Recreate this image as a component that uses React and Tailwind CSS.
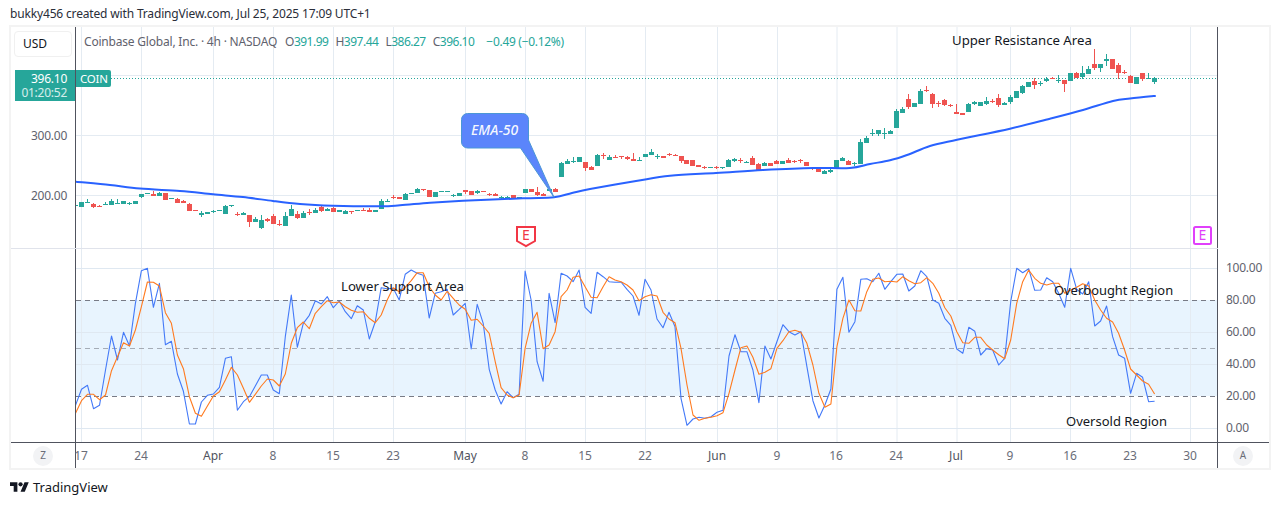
const G = 1, R = 0;
const C2 = [[G,225,229],[G,216,231],[G,217,219,207,219],[R,222,231,219,233],[R,228,231,225,232],[G,221,225,216,225],[G,212,225,207,225],[G,219,221,207,221],[G,213,221],[G,219,221,216,224],
[G,213,222],[G,192,201,192,204],[G,189,192],[R,191,197,184,197],[G,188,197,186,197],[R,188,209],[G,205,208],[R,207,218,204,218],[R,214,218,210,218],[R,222,242,219,242],
[R,239,242],[G,248,255,244,261],[G,245,251],[G,244,246,240,250],[G,240,243],[G,228,251,225,251],[G,226,229,226,232],[R,251,254,246,258],[G,249,255,246,255],[R,255,275,255,290],
[G,266,275,261,275],[G,270,293,255,296],[R,268,272,264,276],[R,258,281,252,281],[R,281,285,270,287],[G,258,287,246,287],[G,237,257,225,257],[R,252,263,243,266],[G,249,263,243,263],[R,246,249,238,254],
[G,240,248,235,248],[R,231,243,228,246],[G,236,242,234,242],[R,233,245,231,245],[G,239,245],[G,243,251,240,251],[R,243,246,243,251],[G,239,244],[R,239,241,235,241],[R,239,245,234,245],
[G,240,245],[G,213,236,207,236],[G,212,215,208,215],[R,200,204,195,207],[R,201,208],[G,191,209,188,209],[G,189,191],[G,178,188,174,188],[R,178,180,178,183]];
const C3 = [[R,270,290],[G,276,291],[G,274,277],[G,273,275],[G,285,287,281,292],[G,279,288],[R,270,275,270,281],[R,274,285],[G,273,278,269,282],[R,273,277],
[R,282,284,278,287],[R,282,287,279,288],[G,291,293,287,297],[G,291,293,287,296],[R,285,295],[G,292,295],[G,267,279],[R,267,275],[R,276,285,261,288],[R,283,288,279,288],
[G,266,273,263,273],[R,266,275,263,275],[G,189,231,185,231],[G,182,191,176,191],[G,183,186,172,189],[G,171,186],[R,185,205,185,214],[R,200,209,197,209],[G,165,197,161,197],[R,166,168,160,177],
[G,171,179,165,179],[R,170,172,166,175],[R,169,172,169,177],[R,170,177,168,180],[R,178,182,159,182],[G,180,182,170,182],[G,162,170],[G,156,164,147,164],[G,168,172,163,176],[R,168,174],
[R,161,163,158,168],[R,164,166,161,168],[R,169,182,169,189],[R,181,192],[R,181,197],[R,195,200],[R,200,202,197,207],[G,201,203],[R,201,203,197,207],[G,202,204,202,207],
[G,180,201,177,201],[G,178,183,175,186],[R,181,183,174,189],[G,185,187,183,187],[R,174,195,168,195],[R,192,210,189,214],[G,188,197,186,197],[R,189,197],[R,184,191,181,191],[G,182,191],
[R,179,189,173,189],[R,184,187,181,189],[R,181,184,177,189],[R,186,197],[R,203,207,200,209],[R,204,216],[G,212,221,209,221],[G,209,216,206,218],[G,180,203],[G,175,182,171,182],
[R,182,194,179,194],[G,188,193,185,197]];
const C4 = [[G,367,432,358,432],[G,354,369,349,369],[G,338,341,328,349],[G,330,343,330,347],[G,338,341,323,357],[G,333,342,330,342],[G,273,324,268,324],[G,267,279,260,279],[R,238,262,222,267],[G,249,261],
[G,213,252,208,252],[R,210,214,198,216],[R,222,252,218,264],[R,248,251,244,261],[R,240,255,238,258],[R,255,258,252,262],[R,277,282,252,282],[R,280,285],[G,252,276,249,276],[G,247,251,243,256],
[G,246,258],[G,243,252,232,256],[R,242,245,238,248],[R,235,255,222,261],[G,250,255,246,255],[G,231,246,226,251],[G,214,234],[G,198,219,195,222],[G,187,200],[R,184,194,175,207],
[G,188,190,184,198],[G,176,182,172,186],[R,175,178,172,178],[G,180,182,165,190],[R,181,192,181,216],[G,160,183],[R,160,174,156,174],[G,160,172,138,176],[G,148,162,138,162],[R,132,145,87,150],
[G,133,145,133,155],[G,118,122,102,138],[R,118,147],[R,136,159,130,177],[R,155,158,151,163],[R,168,188,165,188],[G,172,192],[R,160,178,160,183],[G,175,177,160,177],[G,175,186,172,192]];

const conv = (rows, base) => rows.map(([c, t, b, wt, wb]) => {
  const top = Math.round(base + t / 3);
  const bot = Math.max(top + 1, Math.round(base + b / 3));
  const wTop = wt === undefined ? top : Math.round(base + wt / 3);
  const wBot = wb === undefined ? bot : Math.round(base + wb / 3);
  return { c, top, bot, wTop, wBot };
});
const candles = [...conv(C2, 130), ...conv(C3, 100), ...conv(C4, 20)];
const cx = (i) => Math.round(81 + (i - 1) * 5.995);

const B5 = [466,418,406,476,466,360,258,330,247,288,160,62,55,172,100,284,274,372,424,522,522,456,436,432,412,325,320,481,455,440,408,375,375,420,431,260,135,292,220,196,152,162,140,173,153,185,206,167,180,267,215,113,116,115,150,73,60,70,76,204];
const B6 = [130,125,118,195,178,160,297,163,220,358,420,462,425,443,433,63,150,335,394,130,218,70,78,95,60,172,190,67,80,95,97,96,118,138,196,88,120,207,233,187,230,445,526,507,502,505,500,487,481,318,254,305,305,360,458,288,327,275,224,245,255,245,350,452,504,465,417,118,82,247,215,88];
const B7 = [86,95,70,118,95,73,72,123,108,62,80,150,160,205,226,297,310,232,244,315,296,300,345,325,155,55,68,56,121,120,83,95,130,172,55,118,132,95,228,213,168,260,315,325,430,370,382,455,454];
const O5 = [490,452,433,433,449,435,362,320,278,288,240,170,96,97,108,188,220,315,356,440,490,499,468,438,425,390,352,375,415,457,433,408,387,390,408,372,280,233,216,236,190,170,152,158,156,170,181,187,185,205,218,195,150,113,125,112,92,68,68,110];
const O6 = [135,150,124,145,165,178,211,208,228,250,335,413,435,443,435,295,220,187,296,285,245,140,120,82,78,110,142,143,110,80,90,95,105,120,152,140,134,138,187,207,218,295,405,495,511,505,502,497,488,430,360,293,288,322,373,367,356,295,272,245,241,247,280,345,430,472,462,290,205,150,182,183];
const O7 = [125,88,84,95,94,96,80,92,101,98,83,100,130,173,198,245,278,280,262,262,285,300,314,326,270,160,95,60,85,100,105,100,100,130,120,112,101,108,150,180,205,216,250,300,357,375,393,403,432];
const line = (arr) => arr.map((z, i) => `${(75.5 + i * 5.995).toFixed(1)},${(250 + z / 3).toFixed(1)}`).join(' ');
const blue = line([...B5, ...B6, ...B7]);
const orange = line([...O5, ...O6, ...O7]);

const emaPts = [[75,181.6],[110,185],[140,188.6],[180,191],[213,194.3],[243,197],[273,201],[300,204],[333,205.7],[380,206.3],[400,205.3],[430,202.7],[463,200.7],[523,198.3],[554,197.3],[572,193],[590,189],[636,181],[670,175.7],[716,173],[763,170],[813,168],[850,168],[870,164],[890,160.3],[907,155],[930,146],[957,139.7],[1010,128.7],[1050,118.7],[1083,110],[1113,101],[1130,98.5],[1155,96]];
const ema = emaPts.reduce((d, p, i, a) => {
  if (i === 0) return `M${p[0]} ${p[1]}`;
  const p0 = a[i - 2] || a[i - 1];
  const p1 = a[i - 1];
  const p3 = a[i + 1] || p;
  const k = 6;
  return `${d}C${(p1[0] + (p[0] - p0[0]) / k).toFixed(1)} ${(p1[1] + (p[1] - p0[1]) / k).toFixed(1)} ${(p[0] - (p3[0] - p1[0]) / k).toFixed(1)} ${(p[1] - (p3[1] - p1[1]) / k).toFixed(1)} ${p[0]} ${p[1]}`;
}, '');

const vGrid = [81.5,141.5,213.5,273.5,333.5,393.5,465.5,525.5,585.5,645.5,717.5,777.5,837,897,957,1010.5,1070.5,1130.5,1190.5];
const ticks = [['17',81],['24',141],['Apr',213,1],['8',273],['15',333],['23',393],['May',465,1],['8',525],['15',585],['22',645],['Jun',717,1],['9',777],['16',836],['24',896],['Jul',956,1],['9',1010],['16',1070],['23',1130],['30',1190]];

function VGrid({ y1, y2 }) {
  return vGrid.map((x) => <line key={x} x1={x} x2={x} y1={y1} y2={y2} stroke="#e4ebf2" strokeWidth="1" />);
}

export default function App() {
  return (
    <div className="w-[1281px] h-[505px] bg-white overflow-hidden font-['Noto_Sans',sans-serif] text-[#131722]">
      <div className="h-[25px] pl-[10px] flex items-center text-[12px] leading-none text-[#2a2e39] pt-[3px] whitespace-nowrap tracking-[-0.16px]">bukky456 created with TradingView.com, Jul 25, 2025 17:09 UTC+1</div>

      <div className="ml-[9px] w-[1262px] h-[445px] border-2 border-[#f3f3f3] flex flex-col">
        <div className="flex h-[221px] relative">
          <div className="w-[65px] shrink-0 pt-[4px] pl-[3px] border-r border-[#50535e]">
            <div className="w-[58px] h-[26px] border border-[#f0f0f0] rounded-[4px] flex items-center pl-[8px] text-[12px]">USD</div>
            <div className="ml-[1px] mt-[13px] w-[60px] h-[31px] bg-[#26a69a] text-right pr-[8px] pt-[2px] text-[12px] leading-[14px] text-white tracking-[-0.25px]">
              <div>396.10</div>
              <div className="text-white/80">01:20:52</div>
            </div>
            <div className="mt-[28px] text-right pr-[8px] text-[12px] leading-[14px] text-[#5f626d] tracking-[-0.25px]">300.00</div>
            <div className="mt-[46px] text-right pr-[8px] text-[12px] leading-[14px] text-[#5f626d] tracking-[-0.25px]">200.00</div>
          </div>
          <div className="relative w-[1142px] shrink-0 border-r border-[#50535e]">
            <svg className="block" width="1141" height="221" viewBox="76 27 1141 221">
              <VGrid y1={27} y2={248} />
              {[75.5, 135.5, 195.5].map((y) => <line key={y} x1="76" x2="1217" y1={y} y2={y} stroke="#e4ebf2" />)}
              <line x1="111" x2="1217" y1="78.5" y2="78.5" stroke="#26a69a" strokeDasharray="1 2" />
              <g shapeRendering="crispEdges">
                {candles.map((k, i) => (
                  <g key={i} fill={k.c ? '#26a69a' : '#ef5350'}>
                    <rect x={cx(i)} y={k.wTop} width="1" height={k.wBot - k.wTop} />
                    <rect x={cx(i) - 2} y={k.top} width="5" height={k.bot - k.top} />
                  </g>
                ))}
              </g>
              <path d={ema} fill="none" stroke="#2962ff" strokeWidth="2" strokeLinejoin="round" strokeLinecap="round" />
              <path d="M467.5 113.5H522.5a6 6 0 0 1 6 6V140L554 197.3L520.5 148H467.5a6 6 0 0 1-6-6V119.5a6 6 0 0 1 6-6Z" fill="#5b85fb" stroke="#4b97d6" strokeWidth="1" />
              <path d="M517 227h18v14l-9 5l-9-5Z" fill="#fff" stroke="#f23645" strokeWidth="2" />
              <rect x="1194" y="227" width="17" height="17" rx="1.5" fill="#fff" stroke="#e040fb" strokeWidth="2" />
            </svg>
            <div className="absolute left-0 top-[43px] h-[17px] w-[35px] bg-[#26a69a] rounded-r-[2px] flex items-center pl-[4px] text-[11.5px] text-white tracking-[-0.2px]">COIN</div>
            <div className="absolute left-[8px] top-[7px] flex gap-[7px] text-[12px] leading-[16px] text-[#5f626d] whitespace-nowrap">
              <span className="w-[194px] whitespace-nowrap tracking-[-0.2px]">Coinbase Global, Inc. · 4h · NASDAQ</span>
              <span className="tracking-[-0.5px]">O<span className="text-[#26a69a]">391.99</span></span>
              <span className="tracking-[-0.5px]">H<span className="text-[#26a69a]">397.44</span></span>
              <span className="tracking-[-0.5px]">L<span className="text-[#26a69a]">386.27</span></span>
              <span className="tracking-[-0.5px]">C<span className="text-[#26a69a]">396.10</span></span>
              <span className="ml-[5px] text-[#26a69a] tracking-[-0.3px]">−0.49 (−0.12%)</span>
            </div>
            <div className="absolute left-[876px] top-[5px] text-[13.2px] leading-[16px] whitespace-nowrap">Upper Resistance Area</div>
            <div className="absolute left-[395px] top-[94px] text-[14px] leading-[18px] italic font-medium text-white/95">EMA-50</div>
            <div className="absolute left-[441px] top-[199px] w-[18px] text-center text-[14px] leading-[18px] text-[#f23645]">E</div>
            <div className="absolute left-[1117px] top-[199px] w-[19px] text-center text-[14px] leading-[18px] text-[#e040fb]">E</div>
          </div>
          <div className="flex-1" />
        </div>
        <div className="h-px bg-[#e0e3eb] mr-[51px]" />
        <div className="flex h-[193px]">
          <div className="w-[65px] shrink-0 border-r border-[#50535e]" />
          <div className="relative w-[1142px] shrink-0 border-r border-[#50535e]">
            <svg className="block" width="1141" height="193" viewBox="76 249 1141 193">
              <rect x="76" y="300" width="1141" height="96" fill="#e8f4fe" />
              <VGrid y1={249} y2={442} />
              {[268.5, 332.5, 364.5, 428.5].map((y) => <line key={y} x1="76" x2="1217" y1={y} y2={y} stroke="#dfe8f1" />)}
              <line x1="76" x2="1217" y1="300.5" y2="300.5" stroke="#787b86" strokeDasharray="5 4" />
              <line x1="76" x2="1217" y1="348.5" y2="348.5" stroke="#787b86" strokeOpacity="0.6" strokeDasharray="5 4" />
              <line x1="76" x2="1217" y1="396.5" y2="396.5" stroke="#787b86" strokeDasharray="5 4" />
              <polyline points={blue} fill="none" stroke="#4379f8" strokeWidth="1.1" strokeLinejoin="round" />
              <polyline points={orange} fill="none" stroke="#ff7a1f" strokeWidth="1.1" strokeLinejoin="round" />
            </svg>
            <div className="absolute left-[265px] top-[28px] text-[13.2px] leading-[18px] whitespace-nowrap">Lower Support Area</div>
            <div className="absolute left-[978px] top-[32px] text-[12.9px] leading-[18px] whitespace-nowrap">Overbought Region</div>
            <div className="absolute left-[990px] top-[163px] text-[13px] leading-[18px] whitespace-nowrap">Oversold Region</div>
          </div>
          <div className="flex-1 flex flex-col pt-[12px] pl-[8px] text-[12px] leading-[14px] text-[#5f626d] tracking-[-0.25px]">
            {['100.00', '80.00', '60.00', '40.00', '20.00', '0.00'].map((t) => (
              <div key={t} className="h-[32px] shrink-0">{t}</div>
            ))}
          </div>
        </div>
        <div className="h-px bg-[#50535e]" />
        <div className="flex h-[25px] relative">
          <div className="w-[65px] shrink-0 border-r border-[#50535e] flex items-center justify-center">
            <div className="w-[20px] h-[20px] rounded-full bg-[#f2f3f5] flex items-center justify-center text-[10px] text-[#6a6d78]">Z</div>
          </div>
          <div className="w-[1142px] shrink-0 border-r border-[#50535e] flex items-center text-[12px]">
            {ticks.map(([t, x, m], i) => (
              <div key={i} className={`w-0 flex justify-center ${m ? 'text-[#50535e]' : 'text-[#6a6d78]'}`} style={{ marginLeft: i === 0 ? x - 76 : x - ticks[i - 1][1] }}>{t}</div>
            ))}
          </div>
          <div className="flex-1 flex items-center justify-center pr-[1px]">
            <div className="w-[20px] h-[20px] rounded-full bg-[#f2f3f5] flex items-center justify-center text-[10px] text-[#6a6d78]">A</div>
          </div>
        </div>
      </div>

      <div className="flex items-center gap-[4px] pl-[10px] mt-[9px] h-[16px]">
        <svg width="19" height="10" viewBox="0 4 36 18" fill="#131722">
          <path d="M14 22H7V11H0V4h14v18ZM28 22h-8l7.5-18h8L28 22Z" />
          <circle cx="20" cy="8" r="4" />
        </svg>
        <span className="text-[13px] leading-none text-[#131722]">TradingView</span>
      </div>
    </div>
  );
}
